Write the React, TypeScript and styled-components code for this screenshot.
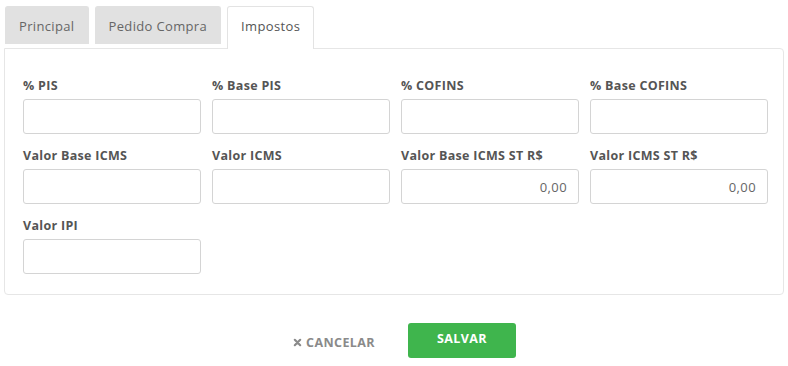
import React from "react";
import styled, { createGlobalStyle } from "styled-components";

const Global = createGlobalStyle`
  html, body { margin: 0; padding: 0; background: #fff; }
  body { font-family: "Open Sans", "Liberation Sans", sans-serif; }
  * { box-sizing: border-box; }
`;

const Page = styled.div`
  width: 788px;
  height: 366px;
  padding: 6px 4px 0 4px;
`;

const TabBar = styled.div`
  display: flex;
  gap: 6px;
  padding-left: 1px;
  position: relative;
  z-index: 1;
`;

const Tab = styled.div<{ $active?: boolean }>`
  height: ${(p) => (p.$active ? "43px" : "38px")};
  padding: 0 13px;
  display: flex;
  align-items: center;
  justify-content: center;
  padding-bottom: ${(p) => (p.$active ? "5px" : "0")};
  font-size: 13px;
  letter-spacing: 0.35px;
  color: ${(p) => (p.$active ? "#555" : "#666")};
  background: ${(p) => (p.$active ? "#fff" : "#e1e1e1")};
  border: 1px solid ${(p) => (p.$active ? "#e3e3e3" : "#e1e1e1")};
  border-bottom: none;
  border-radius: 3px 3px 0 0;
`;

const Panel = styled.div`
  width: 780px;
  margin-top: -1px;
  border: 1px solid #e6e6e6;
  border-radius: 0 4px 4px 4px;
  padding: 29px 15px 20px 18px;
`;

const Grid = styled.div`
  display: grid;
  grid-template-columns: repeat(4, 178px);
  column-gap: 11px;
  row-gap: 14px;
`;

const Field = styled.div`
  display: flex;
  flex-direction: column;
`;

const Label = styled.label`
  font-size: 12.5px;
  font-weight: 700;
  letter-spacing: 0.3px;
  color: #555;
  line-height: 16px;
  margin-bottom: 5px;
  white-space: nowrap;
`;

const Input = styled.div<{ $right?: boolean }>`
  height: 35px;
  border: 1px solid #d4d4d4;
  border-radius: 3px;
  display: flex;
  align-items: center;
  justify-content: ${(p) => (p.$right ? "flex-end" : "flex-start")};
  padding: 0 11px;
  font-size: 13px;
  letter-spacing: 0.4px;
  color: #666;
  background: #fff;
`;

const Footer = styled.div`
  display: flex;
  justify-content: center;
  gap: 20px;
  margin-top: 28px;
  padding-left: 8px;
`;

const CancelButton = styled.button`
  width: 108px;
  height: 35px;
  border: none;
  background: transparent;
  font-family: inherit;
  font-size: 12.5px;
  font-weight: 700;
  letter-spacing: 0.4px;
  color: #8a8a8a;
  display: flex;
  align-items: center;
  justify-content: center;
  gap: 4px;
  padding: 0;
  padding-top: 4px;
`;

const SaveButton = styled.button`
  width: 108px;
  height: 35px;
  border: none;
  border-radius: 3px;
  background: #3fb54d;
  color: #fff;
  font-family: inherit;
  font-size: 12.5px;
  font-weight: 700;
  letter-spacing: 0.4px;
  padding: 0 0 4px 0;
`;

const fields: { label: string; value?: string }[] = [
  { label: "% PIS" },
  { label: "% Base PIS" },
  { label: "% COFINS" },
  { label: "% Base COFINS" },
  { label: "Valor Base ICMS" },
  { label: "Valor ICMS" },
  { label: "Valor Base ICMS ST R$", value: "0,00" },
  { label: "Valor ICMS ST R$", value: "0,00" },
  { label: "Valor IPI" },
];

export default function App() {
  return (
    <Page>
      <Global />
      <TabBar>
        <Tab>Principal</Tab>
        <Tab>Pedido Compra</Tab>
        <Tab $active>Impostos</Tab>
      </TabBar>
      <Panel>
        <Grid>
          {fields.map((f) => (
            <Field key={f.label}>
              <Label>{f.label}</Label>
              <Input $right={!!f.value}>{f.value}</Input>
            </Field>
          ))}
        </Grid>
      </Panel>
      <Footer>
        <CancelButton>
          <svg width="9" height="9" viewBox="0 0 10 10">
            <path d="M2 2 L8 8 M8 2 L2 8" stroke="#8a8a8a" strokeWidth="2.4" strokeLinecap="round" />
          </svg>
          CANCELAR
        </CancelButton>
        <SaveButton>SALVAR</SaveButton>
      </Footer>
    </Page>
  );
}
